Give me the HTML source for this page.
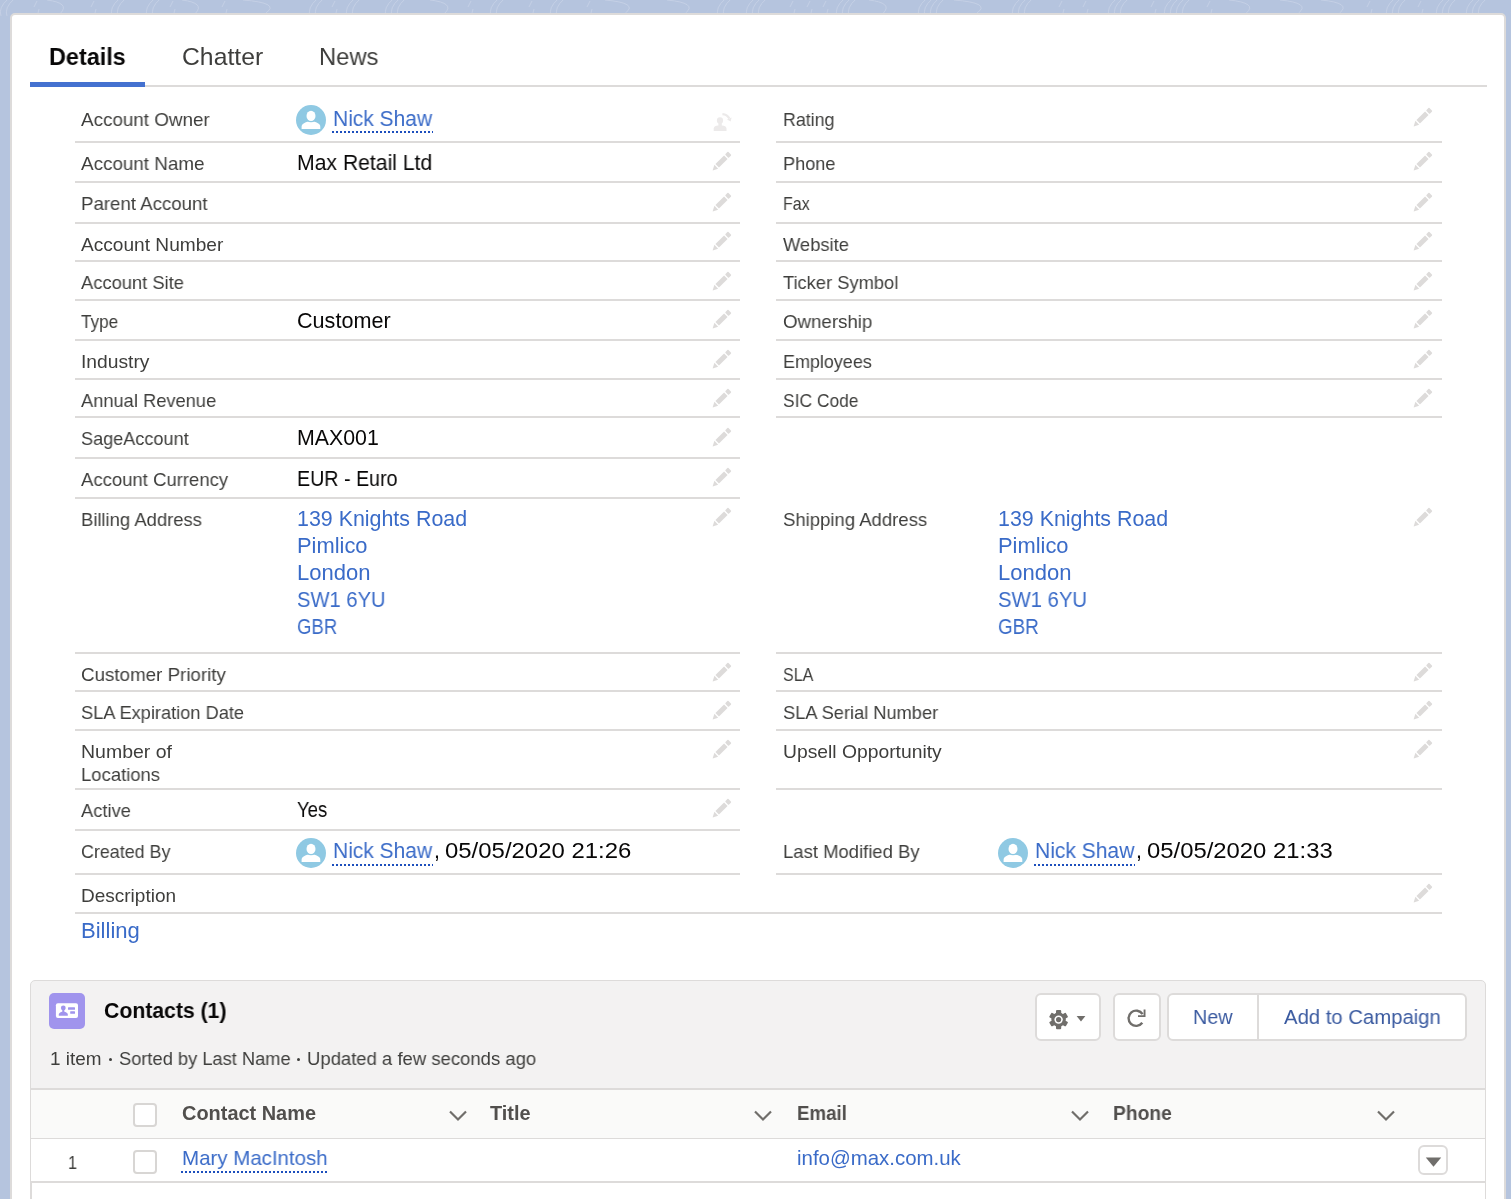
<!DOCTYPE html>
<html><head><meta charset="utf-8"><style>
html,body{margin:0;padding:0;}
body{width:1511px;height:1199px;overflow:hidden;position:relative;background:#b5c4de;font-family:"Liberation Sans",sans-serif;}
.t{position:absolute;white-space:nowrap;line-height:1;will-change:transform;}
</style></head><body>
<svg style="position:absolute;left:0;top:0" width="1511" height="16" viewBox="0 0 1511 16"><path d="M8 -1 Q-2 8 1 16 M14 -1 Q4 8 7 16 M37 1 L34 7 M39 9 L38 13 M47 0 Q70 3 60.8 13 M94 1 L91 7 M96 9 L95 13 M119 -1 Q109 8 112 16 M125 -1 Q115 8 118 16 M154 -1 Q144 8 147 16 M160 -1 Q150 8 153 16 M173 1 L170 7 M175 9 L174 13 M182 0 Q205 3 195.8 13 M225 1 L222 7 M227 9 L226 13 M243 0 Q281 3 265.8 13 M317 -1 Q307 8 310 16 M323 -1 Q313 8 316 16 M335 1 L332 7 M337 9 L336 13 M354 -1 Q344 8 347 16 M360 -1 Q350 8 353 16 M393 -1 Q383 8 386 16 M399 -1 Q389 8 392 16 M405 -1 Q395 8 398 16 M430 0 Q455 3 445.0 13 M471 1 L468 7 M473 9 L472 13 M498 -1 Q488 8 491 16 M504 -1 Q494 8 497 16 M532 1 L529 7 M534 9 L533 13 M558 -1 Q548 8 551 16 M564 -1 Q554 8 557 16 M590 1 L587 7 M592 9 L591 13 M605 0 Q639 3 625.4 13 M667 0 Q698 3 685.6 13 M725 -1 Q715 8 718 16 M731 -1 Q721 8 724 16 M754 -1 Q744 8 747 16 M760 -1 Q750 8 753 16 M766 -1 Q756 8 759 16 M793 1 L790 7 M795 9 L794 13 M810 1 L807 7 M812 9 L811 13 M826 1 L823 7 M828 9 L827 13 M844 -1 Q834 8 837 16 M850 -1 Q840 8 843 16 M856 -1 Q846 8 849 16 M869 0 Q893 3 883.4 13 M926 -1 Q916 8 919 16 M932 -1 Q922 8 925 16 M938 -1 Q928 8 931 16 M944 -1 Q934 8 937 16 M954 0 Q992 3 976.8 13 M1020 -1 Q1010 8 1013 16 M1026 -1 Q1016 8 1019 16 M1032 -1 Q1022 8 1025 16 M1062 1 L1059 7 M1064 9 L1063 13 M1086 1 L1083 7 M1088 9 L1087 13 M1116 -1 Q1106 8 1109 16 M1122 -1 Q1112 8 1115 16 M1128 -1 Q1118 8 1121 16 M1154 1 L1151 7 M1156 9 L1155 13 M1172 -1 Q1162 8 1165 16 M1178 -1 Q1168 8 1171 16 M1184 -1 Q1174 8 1177 16 M1190 -1 Q1180 8 1183 16 M1210 1 L1207 7 M1212 9 L1211 13 M1229 0 Q1258 3 1246.4 13 M1280 0 Q1311 3 1298.6 13 M1321 0 Q1352 3 1339.6 13 M1370 1 L1367 7 M1372 9 L1371 13 M1394 -1 Q1384 8 1387 16 M1400 -1 Q1390 8 1393 16 M1406 -1 Q1396 8 1399 16 M1421 1 L1418 7 M1423 9 L1422 13 M1444 -1 Q1434 8 1437 16 M1450 -1 Q1440 8 1443 16 M1456 -1 Q1446 8 1449 16 M1474 -1 Q1464 8 1467 16 M1480 -1 Q1470 8 1473 16 M1486 -1 Q1476 8 1479 16 M1519 -1 Q1509 8 1512 16 M1525 -1 Q1515 8 1518 16" stroke="#d6deee" stroke-width="1" fill="none" opacity="0.45"/></svg>
<div style="position:absolute;left:10px;top:13px;width:1492px;height:1300px;background:#fff;border:2px solid #dddbda;border-radius:5px;"></div>
<div class="t" style="left:49.20px;top:45px;font-size:24px;color:#080707;font-weight:bold;transform:scaleX(0.9756);transform-origin:0 0;">Details</div>
<div class="t" style="left:181.50px;top:45px;font-size:24.6px;color:#3e3e3c;font-weight:normal;transform:scaleX(1.0063);transform-origin:0 0;">Chatter</div>
<div class="t" style="left:318.60px;top:45px;font-size:24px;color:#3e3e3c;font-weight:normal;transform:scaleX(0.9900);transform-origin:0 0;">News</div>
<div style="position:absolute;left:30px;top:85px;width:1457px;height:2px;background:#dddbda;"></div>
<div style="position:absolute;left:30px;top:82px;width:115px;height:5px;background:#4471d0;"></div>
<div style="position:absolute;left:75px;top:141px;width:665px;height:2px;background:#dddbda;"></div>
<div style="position:absolute;left:75px;top:181px;width:665px;height:2px;background:#dddbda;"></div>
<div style="position:absolute;left:75px;top:222px;width:665px;height:2px;background:#dddbda;"></div>
<div style="position:absolute;left:75px;top:260px;width:665px;height:2px;background:#dddbda;"></div>
<div style="position:absolute;left:75px;top:299px;width:665px;height:2px;background:#dddbda;"></div>
<div style="position:absolute;left:75px;top:339px;width:665px;height:2px;background:#dddbda;"></div>
<div style="position:absolute;left:75px;top:378px;width:665px;height:2px;background:#dddbda;"></div>
<div style="position:absolute;left:75px;top:416px;width:665px;height:2px;background:#dddbda;"></div>
<div style="position:absolute;left:75px;top:457px;width:665px;height:2px;background:#dddbda;"></div>
<div style="position:absolute;left:75px;top:497px;width:665px;height:2px;background:#dddbda;"></div>
<div style="position:absolute;left:75px;top:652px;width:665px;height:2px;background:#dddbda;"></div>
<div style="position:absolute;left:75px;top:690px;width:665px;height:2px;background:#dddbda;"></div>
<div style="position:absolute;left:75px;top:729px;width:665px;height:2px;background:#dddbda;"></div>
<div style="position:absolute;left:75px;top:788px;width:665px;height:2px;background:#dddbda;"></div>
<div style="position:absolute;left:75px;top:829px;width:665px;height:2px;background:#dddbda;"></div>
<div style="position:absolute;left:75px;top:873px;width:665px;height:2px;background:#dddbda;"></div>
<div style="position:absolute;left:776px;top:141px;width:666px;height:2px;background:#dddbda;"></div>
<div style="position:absolute;left:776px;top:181px;width:666px;height:2px;background:#dddbda;"></div>
<div style="position:absolute;left:776px;top:222px;width:666px;height:2px;background:#dddbda;"></div>
<div style="position:absolute;left:776px;top:260px;width:666px;height:2px;background:#dddbda;"></div>
<div style="position:absolute;left:776px;top:299px;width:666px;height:2px;background:#dddbda;"></div>
<div style="position:absolute;left:776px;top:339px;width:666px;height:2px;background:#dddbda;"></div>
<div style="position:absolute;left:776px;top:378px;width:666px;height:2px;background:#dddbda;"></div>
<div style="position:absolute;left:776px;top:416px;width:666px;height:2px;background:#dddbda;"></div>
<div style="position:absolute;left:776px;top:652px;width:666px;height:2px;background:#dddbda;"></div>
<div style="position:absolute;left:776px;top:690px;width:666px;height:2px;background:#dddbda;"></div>
<div style="position:absolute;left:776px;top:729px;width:666px;height:2px;background:#dddbda;"></div>
<div style="position:absolute;left:776px;top:788px;width:666px;height:2px;background:#dddbda;"></div>
<div style="position:absolute;left:776px;top:873px;width:666px;height:2px;background:#dddbda;"></div>
<div style="position:absolute;left:75px;top:912px;width:1367px;height:2px;background:#dddbda;"></div>
<div class="t" style="left:81.00px;top:110px;font-size:19px;color:#3e3e3c;font-weight:normal;transform:scaleX(0.9907);transform-origin:0 0;">Account Owner</div>
<div class="t" style="left:782.70px;top:110px;font-size:19px;color:#3e3e3c;font-weight:normal;transform:scaleX(0.9379);transform-origin:0 0;">Rating</div>
<div class="t" style="left:81.00px;top:154px;font-size:19px;color:#3e3e3c;font-weight:normal;transform:scaleX(0.9909);transform-origin:0 0;">Account Name</div>
<div class="t" style="left:297.20px;top:153px;font-size:21.3px;color:#080707;font-weight:normal;transform:scaleX(0.9937);transform-origin:0 0;">Max Retail Ltd</div>
<div class="t" style="left:782.70px;top:154px;font-size:19px;color:#3e3e3c;font-weight:normal;transform:scaleX(0.9553);transform-origin:0 0;">Phone</div>
<div class="t" style="left:81.00px;top:194px;font-size:19px;color:#3e3e3c;font-weight:normal;transform:scaleX(0.9816);transform-origin:0 0;">Parent Account</div>
<div class="t" style="left:782.70px;top:194px;font-size:19px;color:#3e3e3c;font-weight:normal;transform:scaleX(0.8427);transform-origin:0 0;">Fax</div>
<div class="t" style="left:81.00px;top:235px;font-size:19px;color:#3e3e3c;font-weight:normal;transform:scaleX(1.0056);transform-origin:0 0;">Account Number</div>
<div class="t" style="left:782.70px;top:235px;font-size:19px;color:#3e3e3c;font-weight:normal;transform:scaleX(0.9648);transform-origin:0 0;">Website</div>
<div class="t" style="left:81.00px;top:273px;font-size:19px;color:#3e3e3c;font-weight:normal;transform:scaleX(0.9655);transform-origin:0 0;">Account Site</div>
<div class="t" style="left:782.70px;top:273px;font-size:19px;color:#3e3e3c;font-weight:normal;transform:scaleX(0.9636);transform-origin:0 0;">Ticker Symbol</div>
<div class="t" style="left:81.00px;top:312px;font-size:19px;color:#3e3e3c;font-weight:normal;transform:scaleX(0.9057);transform-origin:0 0;">Type</div>
<div class="t" style="left:297.20px;top:311px;font-size:21.3px;color:#080707;font-weight:normal;transform:scaleX(1.0137);transform-origin:0 0;">Customer</div>
<div class="t" style="left:782.70px;top:312px;font-size:19px;color:#3e3e3c;font-weight:normal;transform:scaleX(0.9833);transform-origin:0 0;">Ownership</div>
<div class="t" style="left:81.00px;top:352px;font-size:19px;color:#3e3e3c;font-weight:normal;transform:scaleX(1.0134);transform-origin:0 0;">Industry</div>
<div class="t" style="left:782.70px;top:352px;font-size:19px;color:#3e3e3c;font-weight:normal;transform:scaleX(0.9447);transform-origin:0 0;">Employees</div>
<div class="t" style="left:81.00px;top:391px;font-size:19px;color:#3e3e3c;font-weight:normal;transform:scaleX(0.9622);transform-origin:0 0;">Annual Revenue</div>
<div class="t" style="left:782.70px;top:391px;font-size:19px;color:#3e3e3c;font-weight:normal;transform:scaleX(0.9167);transform-origin:0 0;">SIC Code</div>
<div class="t" style="left:81.00px;top:429px;font-size:19px;color:#3e3e3c;font-weight:normal;transform:scaleX(0.9527);transform-origin:0 0;">SageAccount</div>
<div class="t" style="left:297.20px;top:428px;font-size:21.3px;color:#080707;font-weight:normal;transform:scaleX(1.0014);transform-origin:0 0;">MAX001</div>
<div class="t" style="left:81.00px;top:470px;font-size:19px;color:#3e3e3c;font-weight:normal;transform:scaleX(0.9742);transform-origin:0 0;">Account Currency</div>
<div class="t" style="left:297.20px;top:469px;font-size:21.3px;color:#080707;font-weight:normal;transform:scaleX(0.9229);transform-origin:0 0;">EUR - Euro</div>
<div class="t" style="left:81.00px;top:510px;font-size:19px;color:#3e3e3c;font-weight:normal;transform:scaleX(0.9708);transform-origin:0 0;">Billing Address</div>
<div class="t" style="left:782.70px;top:510px;font-size:19px;color:#3e3e3c;font-weight:normal;transform:scaleX(0.9745);transform-origin:0 0;">Shipping Address</div>
<div class="t" style="left:81.00px;top:665px;font-size:19px;color:#3e3e3c;font-weight:normal;transform:scaleX(0.9872);transform-origin:0 0;">Customer Priority</div>
<div class="t" style="left:782.70px;top:665px;font-size:19px;color:#3e3e3c;font-weight:normal;transform:scaleX(0.8438);transform-origin:0 0;">SLA</div>
<div class="t" style="left:81.00px;top:703px;font-size:19px;color:#3e3e3c;font-weight:normal;transform:scaleX(0.9585);transform-origin:0 0;">SLA Expiration Date</div>
<div class="t" style="left:782.70px;top:703px;font-size:19px;color:#3e3e3c;font-weight:normal;transform:scaleX(0.9604);transform-origin:0 0;">SLA Serial Number</div>
<div class="t" style="left:81.00px;top:742px;font-size:19px;color:#3e3e3c;font-weight:normal;transform:scaleX(1.0256);transform-origin:0 0;">Number of</div>
<div class="t" style="left:782.70px;top:742px;font-size:19px;color:#3e3e3c;font-weight:normal;transform:scaleX(1.0152);transform-origin:0 0;">Upsell Opportunity</div>
<div class="t" style="left:81.00px;top:801px;font-size:19px;color:#3e3e3c;font-weight:normal;transform:scaleX(0.9627);transform-origin:0 0;">Active</div>
<div class="t" style="left:297.20px;top:800px;font-size:21.3px;color:#080707;font-weight:normal;transform:scaleX(0.8714);transform-origin:0 0;">Yes</div>
<div class="t" style="left:81.00px;top:842px;font-size:19px;color:#3e3e3c;font-weight:normal;transform:scaleX(0.9416);transform-origin:0 0;">Created By</div>
<div class="t" style="left:782.70px;top:842px;font-size:19px;color:#3e3e3c;font-weight:normal;transform:scaleX(0.9725);transform-origin:0 0;">Last Modified By</div>
<div class="t" style="left:81.00px;top:886px;font-size:19px;color:#3e3e3c;font-weight:normal;transform:scaleX(0.9995);transform-origin:0 0;">Description</div>
<div class="t" style="left:81.00px;top:765px;font-size:19px;color:#3e3e3c;font-weight:normal;transform:scaleX(0.9715);transform-origin:0 0;">Locations</div>
<div class="t" style="left:297.20px;top:509px;font-size:21.3px;color:#3a6bc8;font-weight:normal;transform:scaleX(1.0045);transform-origin:0 0;">139 Knights Road</div>
<div class="t" style="left:998.40px;top:509px;font-size:21.3px;color:#3a6bc8;font-weight:normal;transform:scaleX(1.0051);transform-origin:0 0;">139 Knights Road</div>
<div class="t" style="left:297.20px;top:536px;font-size:21.3px;color:#3a6bc8;font-weight:normal;transform:scaleX(1.0271);transform-origin:0 0;">Pimlico</div>
<div class="t" style="left:998.40px;top:536px;font-size:21.3px;color:#3a6bc8;font-weight:normal;transform:scaleX(1.0271);transform-origin:0 0;">Pimlico</div>
<div class="t" style="left:297.20px;top:563px;font-size:21.3px;color:#3a6bc8;font-weight:normal;transform:scaleX(1.0339);transform-origin:0 0;">London</div>
<div class="t" style="left:998.40px;top:563px;font-size:21.3px;color:#3a6bc8;font-weight:normal;transform:scaleX(1.0339);transform-origin:0 0;">London</div>
<div class="t" style="left:297.20px;top:590px;font-size:21.3px;color:#3a6bc8;font-weight:normal;transform:scaleX(0.9475);transform-origin:0 0;">SW1 6YU</div>
<div class="t" style="left:998.40px;top:590px;font-size:21.3px;color:#3a6bc8;font-weight:normal;transform:scaleX(0.9529);transform-origin:0 0;">SW1 6YU</div>
<div class="t" style="left:297.20px;top:617px;font-size:21.3px;color:#3a6bc8;font-weight:normal;transform:scaleX(0.8729);transform-origin:0 0;">GBR</div>
<div class="t" style="left:998.40px;top:617px;font-size:21.3px;color:#3a6bc8;font-weight:normal;transform:scaleX(0.8837);transform-origin:0 0;">GBR</div>
<svg style="position:absolute;left:296px;top:105px" width="30" height="30" viewBox="0 0 30 30"><circle cx="15" cy="15" r="15" fill="#8fc9e3"/><path d="M5.6 24 L5.6 21.8 C5.6 18.6 10 16.6 15 16.6 C20 16.6 24.3 18.6 24.3 21.8 L24.3 24 Z" fill="#fff"/><ellipse cx="15" cy="10.9" rx="5.7" ry="6.4" fill="#8fc9e3"/><ellipse cx="15" cy="10.9" rx="4.5" ry="5.2" fill="#fff"/></svg>
<div class="t" style="left:333.40px;top:109px;font-size:21.3px;color:#3a6bc8;font-weight:normal;transform:scaleX(0.9851);transform-origin:0 0;">Nick Shaw</div>
<div style="position:absolute;left:332px;top:131px;width:101px;height:2px;background:repeating-linear-gradient(to right,#1d4fbd 0 2px,transparent 2px 4px);"></div>
<svg style="position:absolute;left:296px;top:838px" width="30" height="30" viewBox="0 0 30 30"><circle cx="15" cy="15" r="15" fill="#8fc9e3"/><path d="M5.6 24 L5.6 21.8 C5.6 18.6 10 16.6 15 16.6 C20 16.6 24.3 18.6 24.3 21.8 L24.3 24 Z" fill="#fff"/><ellipse cx="15" cy="10.9" rx="5.7" ry="6.4" fill="#8fc9e3"/><ellipse cx="15" cy="10.9" rx="4.5" ry="5.2" fill="#fff"/></svg>
<div class="t" style="left:333.40px;top:841px;font-size:21.3px;color:#3a6bc8;font-weight:normal;transform:scaleX(0.9851);transform-origin:0 0;">Nick Shaw</div>
<div class="t" style="left:434.00px;top:841px;font-size:21.3px;color:#080707;font-weight:normal;">,</div>
<div class="t" style="left:445.00px;top:841px;font-size:21.3px;color:#080707;font-weight:normal;transform:scaleX(1.1235);transform-origin:0 0;">05/05/2020 21:26</div>
<div style="position:absolute;left:332px;top:864px;width:101px;height:2px;background:repeating-linear-gradient(to right,#1d4fbd 0 2px,transparent 2px 4px);"></div>
<svg style="position:absolute;left:998px;top:838px" width="30" height="30" viewBox="0 0 30 30"><circle cx="15" cy="15" r="15" fill="#8fc9e3"/><path d="M5.6 24 L5.6 21.8 C5.6 18.6 10 16.6 15 16.6 C20 16.6 24.3 18.6 24.3 21.8 L24.3 24 Z" fill="#fff"/><ellipse cx="15" cy="10.9" rx="5.7" ry="6.4" fill="#8fc9e3"/><ellipse cx="15" cy="10.9" rx="4.5" ry="5.2" fill="#fff"/></svg>
<div class="t" style="left:1034.60px;top:841px;font-size:21.3px;color:#3a6bc8;font-weight:normal;transform:scaleX(0.9881);transform-origin:0 0;">Nick Shaw</div>
<div class="t" style="left:1135.70px;top:841px;font-size:21.3px;color:#080707;font-weight:normal;">,</div>
<div class="t" style="left:1146.70px;top:841px;font-size:21.3px;color:#080707;font-weight:normal;transform:scaleX(1.1199);transform-origin:0 0;">05/05/2020 21:33</div>
<div style="position:absolute;left:1033.5px;top:864px;width:101px;height:2px;background:repeating-linear-gradient(to right,#1d4fbd 0 2px,transparent 2px 4px);"></div>
<div class="t" style="left:81.00px;top:921px;font-size:21.3px;color:#3a6bc8;font-weight:normal;transform:scaleX(1.0349);transform-origin:0 0;">Billing</div>
<svg style="position:absolute;left:712.2px;top:151px" width="20" height="20" viewBox="0 0 20 20"><g transform="rotate(-45 10 10)" fill="#dddbda"><path d="M-3.3 10 L1.9 7.3 L1.9 12.7 Z"/><rect x="3.2" y="7.5" width="12.2" height="5"/><rect x="16.7" y="7.5" width="4.2" height="5" rx="0.8"/></g></svg>
<svg style="position:absolute;left:712.2px;top:191.7px" width="20" height="20" viewBox="0 0 20 20"><g transform="rotate(-45 10 10)" fill="#dddbda"><path d="M-3.3 10 L1.9 7.3 L1.9 12.7 Z"/><rect x="3.2" y="7.5" width="12.2" height="5"/><rect x="16.7" y="7.5" width="4.2" height="5" rx="0.8"/></g></svg>
<svg style="position:absolute;left:712.2px;top:231.4px" width="20" height="20" viewBox="0 0 20 20"><g transform="rotate(-45 10 10)" fill="#dddbda"><path d="M-3.3 10 L1.9 7.3 L1.9 12.7 Z"/><rect x="3.2" y="7.5" width="12.2" height="5"/><rect x="16.7" y="7.5" width="4.2" height="5" rx="0.8"/></g></svg>
<svg style="position:absolute;left:712.2px;top:270.5px" width="20" height="20" viewBox="0 0 20 20"><g transform="rotate(-45 10 10)" fill="#dddbda"><path d="M-3.3 10 L1.9 7.3 L1.9 12.7 Z"/><rect x="3.2" y="7.5" width="12.2" height="5"/><rect x="16.7" y="7.5" width="4.2" height="5" rx="0.8"/></g></svg>
<svg style="position:absolute;left:712.2px;top:309.3px" width="20" height="20" viewBox="0 0 20 20"><g transform="rotate(-45 10 10)" fill="#dddbda"><path d="M-3.3 10 L1.9 7.3 L1.9 12.7 Z"/><rect x="3.2" y="7.5" width="12.2" height="5"/><rect x="16.7" y="7.5" width="4.2" height="5" rx="0.8"/></g></svg>
<svg style="position:absolute;left:712.2px;top:349.3px" width="20" height="20" viewBox="0 0 20 20"><g transform="rotate(-45 10 10)" fill="#dddbda"><path d="M-3.3 10 L1.9 7.3 L1.9 12.7 Z"/><rect x="3.2" y="7.5" width="12.2" height="5"/><rect x="16.7" y="7.5" width="4.2" height="5" rx="0.8"/></g></svg>
<svg style="position:absolute;left:712.2px;top:388px" width="20" height="20" viewBox="0 0 20 20"><g transform="rotate(-45 10 10)" fill="#dddbda"><path d="M-3.3 10 L1.9 7.3 L1.9 12.7 Z"/><rect x="3.2" y="7.5" width="12.2" height="5"/><rect x="16.7" y="7.5" width="4.2" height="5" rx="0.8"/></g></svg>
<svg style="position:absolute;left:712.2px;top:426.7px" width="20" height="20" viewBox="0 0 20 20"><g transform="rotate(-45 10 10)" fill="#dddbda"><path d="M-3.3 10 L1.9 7.3 L1.9 12.7 Z"/><rect x="3.2" y="7.5" width="12.2" height="5"/><rect x="16.7" y="7.5" width="4.2" height="5" rx="0.8"/></g></svg>
<svg style="position:absolute;left:712.2px;top:466.7px" width="20" height="20" viewBox="0 0 20 20"><g transform="rotate(-45 10 10)" fill="#dddbda"><path d="M-3.3 10 L1.9 7.3 L1.9 12.7 Z"/><rect x="3.2" y="7.5" width="12.2" height="5"/><rect x="16.7" y="7.5" width="4.2" height="5" rx="0.8"/></g></svg>
<svg style="position:absolute;left:712.2px;top:507.3px" width="20" height="20" viewBox="0 0 20 20"><g transform="rotate(-45 10 10)" fill="#dddbda"><path d="M-3.3 10 L1.9 7.3 L1.9 12.7 Z"/><rect x="3.2" y="7.5" width="12.2" height="5"/><rect x="16.7" y="7.5" width="4.2" height="5" rx="0.8"/></g></svg>
<svg style="position:absolute;left:712.2px;top:662.3px" width="20" height="20" viewBox="0 0 20 20"><g transform="rotate(-45 10 10)" fill="#dddbda"><path d="M-3.3 10 L1.9 7.3 L1.9 12.7 Z"/><rect x="3.2" y="7.5" width="12.2" height="5"/><rect x="16.7" y="7.5" width="4.2" height="5" rx="0.8"/></g></svg>
<svg style="position:absolute;left:712.2px;top:700.3px" width="20" height="20" viewBox="0 0 20 20"><g transform="rotate(-45 10 10)" fill="#dddbda"><path d="M-3.3 10 L1.9 7.3 L1.9 12.7 Z"/><rect x="3.2" y="7.5" width="12.2" height="5"/><rect x="16.7" y="7.5" width="4.2" height="5" rx="0.8"/></g></svg>
<svg style="position:absolute;left:712.2px;top:739.3px" width="20" height="20" viewBox="0 0 20 20"><g transform="rotate(-45 10 10)" fill="#dddbda"><path d="M-3.3 10 L1.9 7.3 L1.9 12.7 Z"/><rect x="3.2" y="7.5" width="12.2" height="5"/><rect x="16.7" y="7.5" width="4.2" height="5" rx="0.8"/></g></svg>
<svg style="position:absolute;left:712.2px;top:798.3px" width="20" height="20" viewBox="0 0 20 20"><g transform="rotate(-45 10 10)" fill="#dddbda"><path d="M-3.3 10 L1.9 7.3 L1.9 12.7 Z"/><rect x="3.2" y="7.5" width="12.2" height="5"/><rect x="16.7" y="7.5" width="4.2" height="5" rx="0.8"/></g></svg>
<svg style="position:absolute;left:1413.3px;top:106.7px" width="20" height="20" viewBox="0 0 20 20"><g transform="rotate(-45 10 10)" fill="#dddbda"><path d="M-3.3 10 L1.9 7.3 L1.9 12.7 Z"/><rect x="3.2" y="7.5" width="12.2" height="5"/><rect x="16.7" y="7.5" width="4.2" height="5" rx="0.8"/></g></svg>
<svg style="position:absolute;left:1413.3px;top:151px" width="20" height="20" viewBox="0 0 20 20"><g transform="rotate(-45 10 10)" fill="#dddbda"><path d="M-3.3 10 L1.9 7.3 L1.9 12.7 Z"/><rect x="3.2" y="7.5" width="12.2" height="5"/><rect x="16.7" y="7.5" width="4.2" height="5" rx="0.8"/></g></svg>
<svg style="position:absolute;left:1413.3px;top:191.7px" width="20" height="20" viewBox="0 0 20 20"><g transform="rotate(-45 10 10)" fill="#dddbda"><path d="M-3.3 10 L1.9 7.3 L1.9 12.7 Z"/><rect x="3.2" y="7.5" width="12.2" height="5"/><rect x="16.7" y="7.5" width="4.2" height="5" rx="0.8"/></g></svg>
<svg style="position:absolute;left:1413.3px;top:231.4px" width="20" height="20" viewBox="0 0 20 20"><g transform="rotate(-45 10 10)" fill="#dddbda"><path d="M-3.3 10 L1.9 7.3 L1.9 12.7 Z"/><rect x="3.2" y="7.5" width="12.2" height="5"/><rect x="16.7" y="7.5" width="4.2" height="5" rx="0.8"/></g></svg>
<svg style="position:absolute;left:1413.3px;top:270.5px" width="20" height="20" viewBox="0 0 20 20"><g transform="rotate(-45 10 10)" fill="#dddbda"><path d="M-3.3 10 L1.9 7.3 L1.9 12.7 Z"/><rect x="3.2" y="7.5" width="12.2" height="5"/><rect x="16.7" y="7.5" width="4.2" height="5" rx="0.8"/></g></svg>
<svg style="position:absolute;left:1413.3px;top:309.3px" width="20" height="20" viewBox="0 0 20 20"><g transform="rotate(-45 10 10)" fill="#dddbda"><path d="M-3.3 10 L1.9 7.3 L1.9 12.7 Z"/><rect x="3.2" y="7.5" width="12.2" height="5"/><rect x="16.7" y="7.5" width="4.2" height="5" rx="0.8"/></g></svg>
<svg style="position:absolute;left:1413.3px;top:349.3px" width="20" height="20" viewBox="0 0 20 20"><g transform="rotate(-45 10 10)" fill="#dddbda"><path d="M-3.3 10 L1.9 7.3 L1.9 12.7 Z"/><rect x="3.2" y="7.5" width="12.2" height="5"/><rect x="16.7" y="7.5" width="4.2" height="5" rx="0.8"/></g></svg>
<svg style="position:absolute;left:1413.3px;top:388px" width="20" height="20" viewBox="0 0 20 20"><g transform="rotate(-45 10 10)" fill="#dddbda"><path d="M-3.3 10 L1.9 7.3 L1.9 12.7 Z"/><rect x="3.2" y="7.5" width="12.2" height="5"/><rect x="16.7" y="7.5" width="4.2" height="5" rx="0.8"/></g></svg>
<svg style="position:absolute;left:1413.3px;top:507.3px" width="20" height="20" viewBox="0 0 20 20"><g transform="rotate(-45 10 10)" fill="#dddbda"><path d="M-3.3 10 L1.9 7.3 L1.9 12.7 Z"/><rect x="3.2" y="7.5" width="12.2" height="5"/><rect x="16.7" y="7.5" width="4.2" height="5" rx="0.8"/></g></svg>
<svg style="position:absolute;left:1413.3px;top:662.3px" width="20" height="20" viewBox="0 0 20 20"><g transform="rotate(-45 10 10)" fill="#dddbda"><path d="M-3.3 10 L1.9 7.3 L1.9 12.7 Z"/><rect x="3.2" y="7.5" width="12.2" height="5"/><rect x="16.7" y="7.5" width="4.2" height="5" rx="0.8"/></g></svg>
<svg style="position:absolute;left:1413.3px;top:700.3px" width="20" height="20" viewBox="0 0 20 20"><g transform="rotate(-45 10 10)" fill="#dddbda"><path d="M-3.3 10 L1.9 7.3 L1.9 12.7 Z"/><rect x="3.2" y="7.5" width="12.2" height="5"/><rect x="16.7" y="7.5" width="4.2" height="5" rx="0.8"/></g></svg>
<svg style="position:absolute;left:1413.3px;top:739.3px" width="20" height="20" viewBox="0 0 20 20"><g transform="rotate(-45 10 10)" fill="#dddbda"><path d="M-3.3 10 L1.9 7.3 L1.9 12.7 Z"/><rect x="3.2" y="7.5" width="12.2" height="5"/><rect x="16.7" y="7.5" width="4.2" height="5" rx="0.8"/></g></svg>
<svg style="position:absolute;left:1413.3px;top:883.3px" width="20" height="20" viewBox="0 0 20 20"><g transform="rotate(-45 10 10)" fill="#dddbda"><path d="M-3.3 10 L1.9 7.3 L1.9 12.7 Z"/><rect x="3.2" y="7.5" width="12.2" height="5"/><rect x="16.7" y="7.5" width="4.2" height="5" rx="0.8"/></g></svg>
<svg style="position:absolute;left:706px;top:105px" width="32" height="32" viewBox="0 0 32 32"><g fill="#eceaea"><ellipse cx="14" cy="15.6" rx="3.1" ry="3.3"/><rect x="12.4" y="17" width="3.4" height="4"/><path d="M7.7 25.9 L7.7 23.6 C7.7 21.6 10 20.4 12 20.4 L16.2 20.4 C18.2 20.4 20.5 21.6 20.5 23.6 L20.5 25.9 Z"/><path d="M16.4 9.2 Q21.3 9.6 23.3 13.6" stroke="#eceaea" stroke-width="2.3" fill="none"/><path d="M21 14.4 L25.6 12.6 L24.6 16.4 Z"/></g></svg>
<div style="position:absolute;left:30px;top:980px;width:1454px;height:300px;background:#f3f2f2;border:1px solid #dddbda;border-radius:5px;"></div>
<svg style="position:absolute;left:49px;top:993px" width="36" height="36" viewBox="0 0 36 36"><rect width="36" height="36" rx="5" fill="#a094ed"/><rect x="6.9" y="10.2" width="22.1" height="14.8" rx="2" fill="#fff"/><circle cx="14.3" cy="15" r="2.4" fill="#a094ed"/><rect x="13.3" y="16.5" width="2" height="2.5" fill="#a094ed"/><path d="M9.8 22.8 L9.8 21 C10.5 19.2 12.5 18.4 14.3 18.4 C16.1 18.4 18.1 19.2 18.8 21 L18.8 22.8 Z" fill="#a094ed"/><rect x="19" y="14.3" width="7" height="2.5" rx="0.5" fill="#a094ed"/><rect x="21.2" y="18.2" width="4.8" height="2.6" rx="0.5" fill="#a094ed"/></svg>
<div class="t" style="left:104.00px;top:1001px;font-size:21.3px;color:#080707;font-weight:bold;transform:scaleX(0.9954);transform-origin:0 0;">Contacts (1)</div>
<div class="t" style="left:50.00px;top:1050px;font-size:18.7px;color:#3e3e3c;font-weight:normal;transform:scaleX(1.0116);transform-origin:0 0;">1 item</div>
<div class="t" style="left:118.75px;top:1050px;font-size:18.7px;color:#3e3e3c;font-weight:normal;transform:scaleX(0.9776);transform-origin:0 0;">Sorted by Last Name</div>
<div class="t" style="left:307.00px;top:1050px;font-size:18.7px;color:#3e3e3c;font-weight:normal;transform:scaleX(0.9891);transform-origin:0 0;">Updated a few seconds ago</div>
<div style="position:absolute;left:108.65px;top:1057.85px;width:3.5px;height:3.5px;background:#3e3e3c;border-radius:50%;"></div>
<div style="position:absolute;left:296.75px;top:1057.85px;width:3.5px;height:3.5px;background:#3e3e3c;border-radius:50%;"></div>
<div style="position:absolute;left:1035px;top:993px;width:66px;height:48px;background:#fff;border:2px solid #dddbda;border-radius:6px;box-sizing:border-box;"></div>
<div style="position:absolute;left:1113px;top:993px;width:48px;height:48px;background:#fff;border:2px solid #dddbda;border-radius:6px;box-sizing:border-box;"></div>
<div style="position:absolute;left:1167px;top:993px;width:300px;height:48px;background:#fff;border:2px solid #dddbda;border-radius:6px;box-sizing:border-box;"></div>
<div style="position:absolute;left:1257px;top:995px;width:2px;height:44px;background:#dddbda;"></div>
<div class="t" style="left:1193.20px;top:1007px;font-size:20.3px;color:#3a5aa0;font-weight:normal;transform:scaleX(0.9717);transform-origin:0 0;">New</div>
<div class="t" style="left:1283.80px;top:1007px;font-size:20.5px;color:#3a5aa0;font-weight:normal;transform:scaleX(0.9898);transform-origin:0 0;">Add to Campaign</div>
<svg style="position:absolute;left:1048px;top:1009.5px" width="20" height="20" viewBox="0 0 20 20"><g fill="#706e6b" transform="translate(10.6 9.6)"><rect x="-2.6" y="-9.6" width="5.2" height="5" rx="1" transform="rotate(0)"/><rect x="-2.6" y="-9.6" width="5.2" height="5" rx="1" transform="rotate(60)"/><rect x="-2.6" y="-9.6" width="5.2" height="5" rx="1" transform="rotate(120)"/><rect x="-2.6" y="-9.6" width="5.2" height="5" rx="1" transform="rotate(180)"/><rect x="-2.6" y="-9.6" width="5.2" height="5" rx="1" transform="rotate(240)"/><rect x="-2.6" y="-9.6" width="5.2" height="5" rx="1" transform="rotate(300)"/><circle r="7.2"/><circle r="4.2" fill="#fff"/><circle r="2.6"/></g></svg>
<svg style="position:absolute;left:1076px;top:1015px" width="10" height="7" viewBox="0 0 10 7"><path d="M0.6 1 L9.4 1 L5 6.4 Z" fill="#706e6b"/></svg>
<svg style="position:absolute;left:1126px;top:1007.5px" width="22" height="22" viewBox="0 0 22 22"><path d="M16.3 14.8 A7.6 7.6 0 1 1 16.6 6.2" stroke="#706e6b" stroke-width="2.4" fill="none"/><path d="M19.5 1.5 L19.5 9 L12 9 L12 7.2 L17.6 7.2 L17.6 1.5 Z" fill="#706e6b"/></svg>
<div style="position:absolute;left:31px;top:1088px;width:1454px;height:2px;background:#dddbda;"></div>
<div style="position:absolute;left:31px;top:1090px;width:1454px;height:48px;background:#fafaf9;"></div>
<div style="position:absolute;left:31px;top:1138px;width:1454px;height:1px;background:#dddbda;"></div>
<div style="position:absolute;left:31px;top:1139px;width:1454px;height:42px;background:#fff;"></div>
<div style="position:absolute;left:31px;top:1181px;width:1454px;height:2px;background:#dddbda;"></div>
<div style="position:absolute;left:31px;top:1183px;width:1454px;height:30px;background:#fff;"></div>
<div style="position:absolute;left:30px;top:1183px;width:2px;height:30px;background:#dddbda;"></div>
<div style="position:absolute;left:133px;top:1103px;width:24px;height:24px;background:#fff;border:2px solid #d8d6d4;border-radius:4px;box-sizing:border-box;"></div>
<div style="position:absolute;left:133px;top:1150px;width:24px;height:24px;background:#fff;border:2px solid #d8d6d4;border-radius:4px;box-sizing:border-box;"></div>
<div class="t" style="left:181.60px;top:1104px;font-size:19.9px;color:#514f4d;font-weight:bold;transform:scaleX(1.0020);transform-origin:0 0;">Contact Name</div>
<div class="t" style="left:490.00px;top:1104px;font-size:19.9px;color:#514f4d;font-weight:bold;transform:scaleX(0.9939);transform-origin:0 0;">Title</div>
<div class="t" style="left:797.00px;top:1104px;font-size:19.9px;color:#514f4d;font-weight:bold;transform:scaleX(0.9400);transform-origin:0 0;">Email</div>
<div class="t" style="left:1113.00px;top:1104px;font-size:19.9px;color:#514f4d;font-weight:bold;transform:scaleX(0.9672);transform-origin:0 0;">Phone</div>
<svg style="position:absolute;left:447.5px;top:1108px" width="20" height="14" viewBox="0 0 20 14"><path d="M2 3.5 L10 11.5 L18 3.5" stroke="#706e6b" stroke-width="2.2" fill="none"/></svg>
<svg style="position:absolute;left:753px;top:1108px" width="20" height="14" viewBox="0 0 20 14"><path d="M2 3.5 L10 11.5 L18 3.5" stroke="#706e6b" stroke-width="2.2" fill="none"/></svg>
<svg style="position:absolute;left:1069.5px;top:1108px" width="20" height="14" viewBox="0 0 20 14"><path d="M2 3.5 L10 11.5 L18 3.5" stroke="#706e6b" stroke-width="2.2" fill="none"/></svg>
<svg style="position:absolute;left:1375.5px;top:1108px" width="20" height="14" viewBox="0 0 20 14"><path d="M2 3.5 L10 11.5 L18 3.5" stroke="#706e6b" stroke-width="2.2" fill="none"/></svg>
<div class="t" style="left:68.00px;top:1153px;font-size:19px;color:#3e3e3c;font-weight:normal;transform:scaleX(0.8535);transform-origin:0 0;">1</div>
<div class="t" style="left:181.60px;top:1148px;font-size:20.6px;color:#3a6bc8;font-weight:normal;transform:scaleX(0.9944);transform-origin:0 0;">Mary MacIntosh</div>
<div style="position:absolute;left:181px;top:1171px;width:146px;height:2px;background:repeating-linear-gradient(to right,#1d4fbd 0 2px,transparent 2px 4px);"></div>
<div class="t" style="left:797.00px;top:1148px;font-size:20.4px;color:#3a6bc8;font-weight:normal;transform:scaleX(1.0018);transform-origin:0 0;">info@max.com.uk</div>
<div style="position:absolute;left:1418px;top:1145px;width:30px;height:30px;background:#fff;border:2px solid #dddbda;border-radius:6px;box-sizing:border-box;"></div>
<svg style="position:absolute;left:1424px;top:1156px" width="20" height="12" viewBox="0 0 20 12"><path d="M1.8 1.6 L17.2 1.6 L9.5 10.8 Z" fill="#706e6b"/></svg>
</body></html>
